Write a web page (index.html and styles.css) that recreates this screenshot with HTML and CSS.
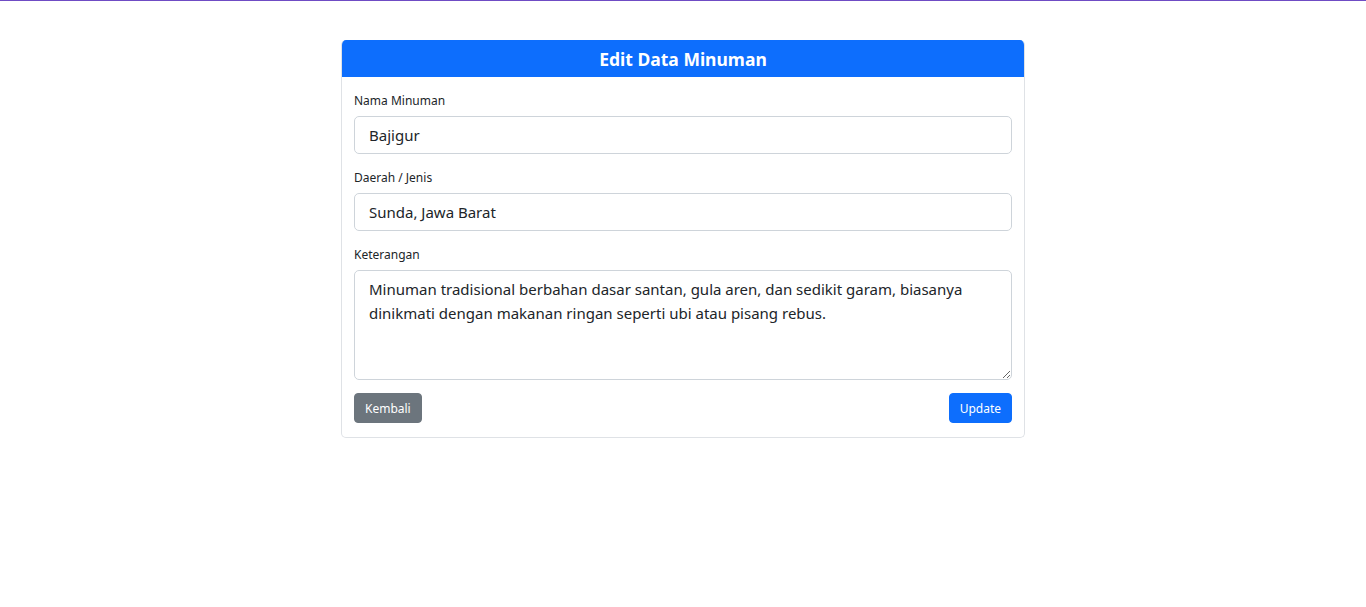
FILE: index.html
```html
<!DOCTYPE html>
<html lang="id">
<head>
<meta charset="utf-8">
<title>Edit Data Minuman</title>
<link rel="stylesheet" href="styles.css">
</head>
<body>
<div class="topline"></div>
<main class="wrap">
  <section class="card">
    <header class="card-header">Edit Data Minuman</header>
    <form class="card-body">
      <div class="field">
        <label class="label" for="nama">Nama Minuman</label>
        <input class="control" id="nama" type="text" value="Bajigur">
      </div>
      <div class="field">
        <label class="label" for="daerah">Daerah / Jenis</label>
        <input class="control" id="daerah" type="text" value="Sunda, Jawa Barat">
      </div>
      <div class="field">
        <label class="label" for="ket">Keterangan</label>
        <textarea class="control area" id="ket">Minuman tradisional berbahan dasar santan, gula aren, dan sedikit garam, biasanya dinikmati dengan makanan ringan seperti ubi atau pisang rebus.</textarea>
      </div>
      <div class="actions">
        <button type="button" class="btn btn-secondary">Kembali</button>
        <button type="submit" class="btn btn-primary">Update</button>
      </div>
    </form>
  </section>
</main>
</body>
</html>
```
FILE: styles.css
```css
* { box-sizing: border-box; }
html, body { margin: 0; padding: 0; background: #fff; }
body {
  font-family: "Noto Sans", "Open Sans", "DejaVu Sans", sans-serif;
  color: #212529;
}
.topline { height: 1px; background: #6f4cc4; }
.wrap {
  display: flex;
  justify-content: center;
  padding-top: 39px;
}
.card {
  width: 684px;
  border: 1px solid #dfe2e6;
  border-top: 0;
  border-radius: 5px;
  overflow: hidden;
}
.card-header {
  background: #0d6efd;
  color: #fff;
  height: 37px;
  display: flex;
  align-items: center;
  justify-content: center;
  font-size: 17.5px;
  font-weight: 700;
  margin: 0 -1px;
  padding-top: 1px;
}
.card-body {
  padding: 13px 12px 14px;
  display: flex;
  flex-direction: column;
  gap: 13px;
}
.field { display: flex; flex-direction: column; }
.label {
  font-size: 12px;
  line-height: 21px;
  margin-bottom: 5px;
  color: #212529;
}
.control {
  font-family: inherit;
  font-size: 15px;
  color: #212529;
  height: 38px;
  padding: 6px 14px;
  border: 1px solid #ced4da;
  border-radius: 5px;
  background: #fff;
  line-height: 24px;
  width: 100%;
}
.area {
  height: 110px;
  resize: vertical;
  display: block;
}
.actions {
  display: flex;
  justify-content: space-between;
}
.btn {
  font-family: inherit;
  font-size: 12px;
  height: 30px;
  padding: 0 10px;
  border: 1px solid transparent;
  border-radius: 4px;
  color: #fff;
  cursor: pointer;
}
.btn-secondary { background: #6c757d; border-color: #6c757d; }
.btn-primary { background: #0d6efd; border-color: #0d6efd; }
```
